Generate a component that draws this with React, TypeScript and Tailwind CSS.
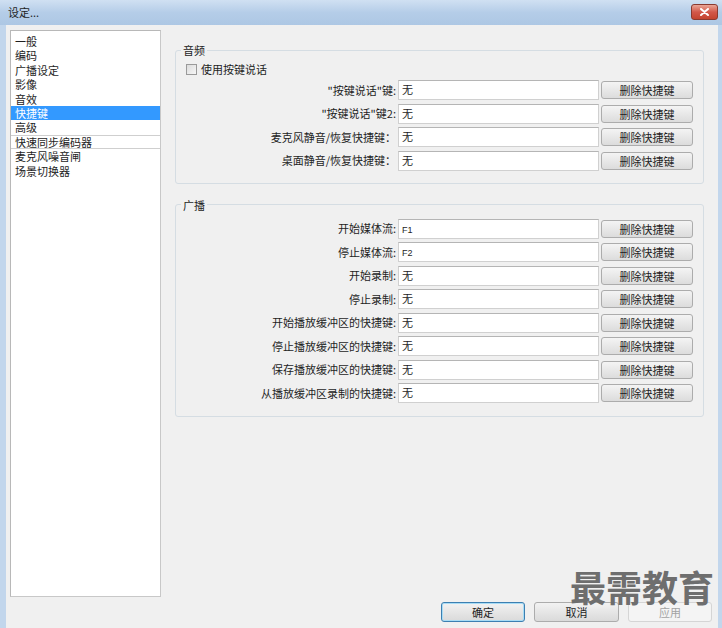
import React from "react";

const navItems = [
  "一般",
  "编码",
  "广播设定",
  "影像",
  "音效",
  "快捷键",
  "高级",
  "快速同步编码器",
  "麦克风噪音闸",
  "场景切换器",
];

const audioRows = [
  { label: "\"按键说话\"键:", value: "无" },
  { label: "\"按键说话\"键2:", value: "无" },
  { label: "麦克风静音/恢复快捷键：", value: "无" },
  { label: "桌面静音/恢复快捷键：", value: "无" },
];

const broadcastRows = [
  { label: "开始媒体流:", value: "F1" },
  { label: "停止媒体流:", value: "F2" },
  { label: "开始录制:", value: "无" },
  { label: "停止录制:", value: "无" },
  { label: "开始播放缓冲区的快捷键:", value: "无" },
  { label: "停止播放缓冲区的快捷键:", value: "无" },
  { label: "保存播放缓冲区的快捷键:", value: "无" },
  { label: "从播放缓冲区录制的快捷键:", value: "无" },
];

function HotkeyRows({ rows }: { rows: { label: string; value: string }[] }) {
  return (
    <div className="grid grid-cols-[1fr_201px_92px] gap-x-[2px] gap-y-[3.5px] pl-[10px] pr-[10px]">
      {rows.map((row) => (
        <React.Fragment key={row.label}>
          <div className="h-[20px] flex items-center justify-end whitespace-nowrap text-[#1e1e1e]">
            {row.label}
          </div>
          <div className="h-[20px] bg-white border border-[#d0d0d0] border-t-[#b5b5b5] pl-[3px] pt-[1px] leading-[14px] text-[#1e1e1e]">
            {row.value === "无" ? (
              row.value
            ) : (
              <span className="text-[9px] font-['Liberation_Sans',sans-serif]">{row.value}</span>
            )}
          </div>
          <div className="h-[20px] flex items-center">
            <button className="h-[18px] w-full rounded-[3px] border border-[#acacac] bg-gradient-to-b from-[#f4f4f4] to-[#dcdcdc] text-[#1e1e1e] leading-[16px]">
              删除快捷键
            </button>
          </div>
        </React.Fragment>
      ))}
    </div>
  );
}

function Group({
  title,
  className,
  children,
}: {
  title: string;
  className?: string;
  children: React.ReactNode;
}) {
  return (
    <fieldset className={`border border-[#d5dde3] rounded-[3px] mr-[8px] ${className ?? ""}`}>
      <legend className="ml-[5px] px-[2px] leading-[14px] text-[#1e1e1e]">{title}</legend>
      {children}
    </fieldset>
  );
}

export default function App() {
  return (
    <div className="relative w-[722px] h-[628px] overflow-hidden flex flex-col bg-[#c2d6ec] text-[11px] font-['Noto_Sans_CJK_SC','Noto_Sans',sans-serif]">
      {/* Title bar */}
      <div className="h-[25px] flex items-center justify-between bg-gradient-to-b from-[#d0e0f2] via-[#b5cde8] to-[#adc7e4] pl-[8px] pr-[4px]">
        <span className="text-[#1e1e1e] text-[11px]">设定...</span>
        <button className="w-[27px] h-[16px] mb-[2px] rounded-[3px] border border-[#8a3a30] bg-gradient-to-b from-[#e9a597] via-[#d2584a] to-[#c4442f] flex items-center justify-center">
          <svg width="9" height="8" viewBox="0 0 9 8">
            <path d="M1 1 L8 7 M8 1 L1 7" stroke="#ffffff" strokeWidth="2" strokeLinecap="round" />
          </svg>
        </button>
      </div>

      {/* Body */}
      <div className="flex-1 flex ml-[6px] mr-[4px] bg-[#f0f0f0]">
        {/* Left list */}
        <div className="ml-[4px] mt-[5px] w-[151px] h-[567px] bg-white border border-[#b8b8b8] border-r-[#c8c8c8] border-b-[#c8c8c8] pt-[3px]">
          {navItems.map((item, i) => (
            <div
              key={item}
              className={`h-[14.4px] leading-[14.4px] pl-[4px] whitespace-nowrap ${
                i === 5
                  ? "bg-[#3399ff] text-white"
                  : i === 7
                  ? "shadow-[inset_0_1px_0_#cfcfcf,inset_0_-1px_0_#cfcfcf] text-[#1e1e1e]"
                  : "text-[#1e1e1e]"
              }`}
            >
              {item}
            </div>
          ))}
        </div>

        {/* Right side */}
        <div className="flex-1 ml-[14px] pr-[6px] pt-[18px] flex flex-col">
          <Group title="音频" className="pb-[12px]">
            <div className="flex items-center gap-[4px] pl-[10px] mt-[7px] h-[11px] mb-[5px]">
              <span className="w-[11px] h-[11px] border border-[#9a9a9a] bg-gradient-to-br from-[#dcdcdc] to-[#f7f7f7]" />
              <span className="text-[#1e1e1e] leading-[11px]">使用按键说话</span>
            </div>
            <HotkeyRows rows={audioRows} />
          </Group>

          <Group title="广播" className="mt-[14px] pt-[7px] pb-[13px]">
            <HotkeyRows rows={broadcastRows} />
          </Group>

          <div className="flex-1" />

          <div className="flex justify-end gap-[9px] mb-[6px]">
            <button className="w-[84px] h-[20px] rounded-[3px] border border-[#3c7fb1] bg-gradient-to-b from-[#f2f2f2] to-[#dadada] shadow-[inset_0_0_0_1px_#a8dcf5] text-[#1e1e1e]">
              确定
            </button>
            <button className="w-[85px] h-[20px] rounded-[3px] border border-[#acacac] bg-gradient-to-b from-[#f2f2f2] to-[#dadada] text-[#1e1e1e]">
              取消
            </button>
            <button className="w-[84px] h-[20px] rounded-[3px] border border-[#d5d5d5] bg-[#f4f4f4] text-[#a3a3a3]">
              应用
            </button>
          </div>
        </div>
      </div>

      {/* Watermark */}
      <div className="absolute left-[570px] top-[564px] text-[36px] leading-[44px] font-bold text-[#6e6e6e] pointer-events-none">
        最需教育
      </div>
    </div>
  );
}
